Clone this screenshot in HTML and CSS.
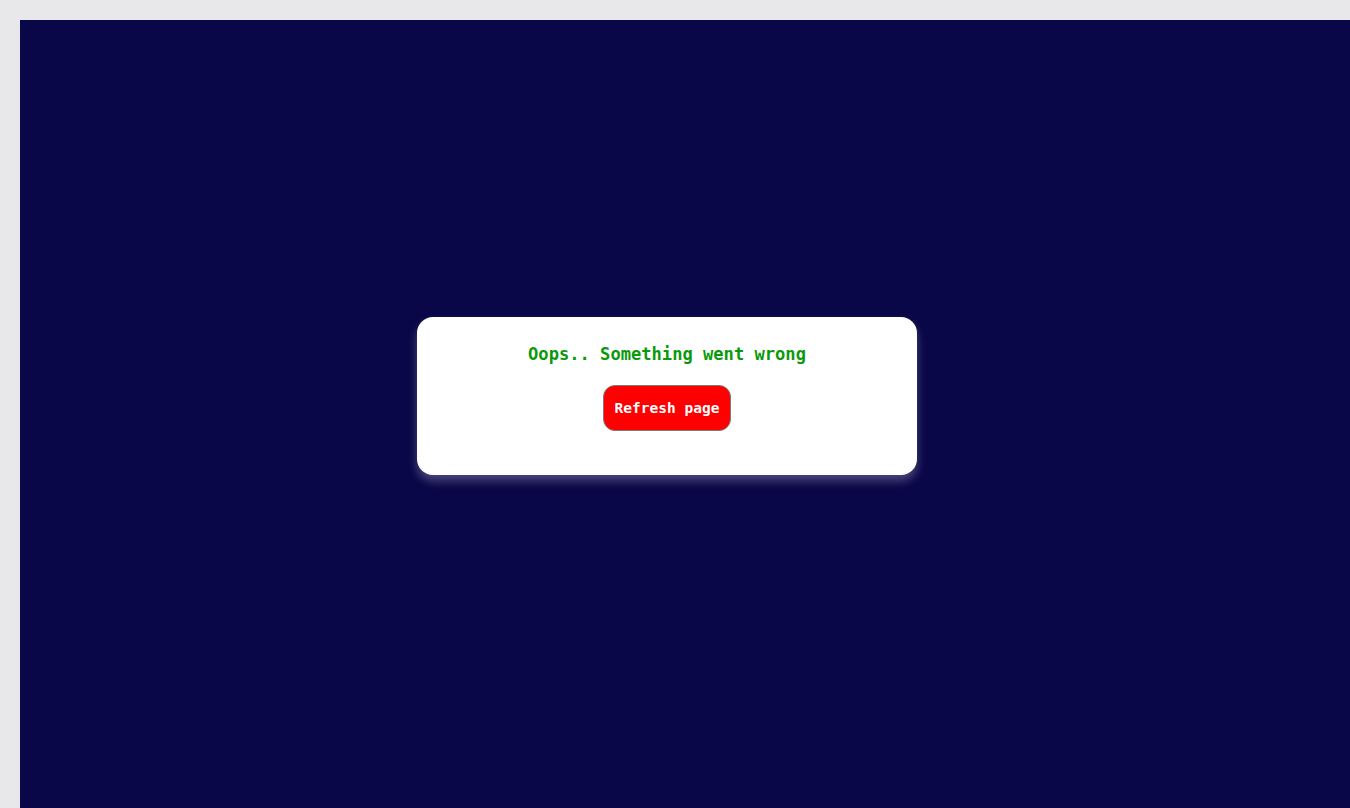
FILE: index.html
```html
<!DOCTYPE html>
<html>
<head>
<meta charset="utf-8">
<link rel="stylesheet" href="styles.css">
</head>
<body>
<div class="stage">
  <div class="card">
    <h3 class="title">Oops.. Something went wrong</h3>
    <button class="refresh">Refresh page</button>
  </div>
</div>
</body>
</html>
```

FILE: styles.css
```css
html, body {
  margin: 0;
  padding: 0;
  overflow: hidden;
  width: 1350px;
  height: 808px;
}
body {
  background: #e8e8ea;
  padding: 20px 0 0 20px;
  box-sizing: border-box;
}
.stage {
  width: 1350px;
  height: 808px;
  background: #0a0748;
  padding: 297px 0 0 397px;
  box-sizing: border-box;
}
.card {
  width: 500px;
  height: 158px;
  box-sizing: border-box;
  background: #ffffff;
  border-radius: 16px;
  padding: 25px 0 0;
  display: flex;
  flex-direction: column;
  align-items: center;
  box-shadow: 0 6px 10px rgba(190, 190, 215, 0.35);
}
.title {
  margin: 0;
  font-family: "DejaVu Sans Mono", "Liberation Mono", monospace;
  font-size: 17.1px;
  line-height: 24px;
  font-weight: bold;
  color: #0a990a;
}
.refresh {
  margin-top: 19px;
  font-family: "DejaVu Sans Mono", "Liberation Mono", monospace;
  font-size: 14.5px;
  font-weight: bold;
  line-height: 18px;
  color: #ffffff;
  background: #ff0000;
  border: 1px solid #7a7a7a;
  border-radius: 12px;
  padding: 13px 10.5px;
}
```
